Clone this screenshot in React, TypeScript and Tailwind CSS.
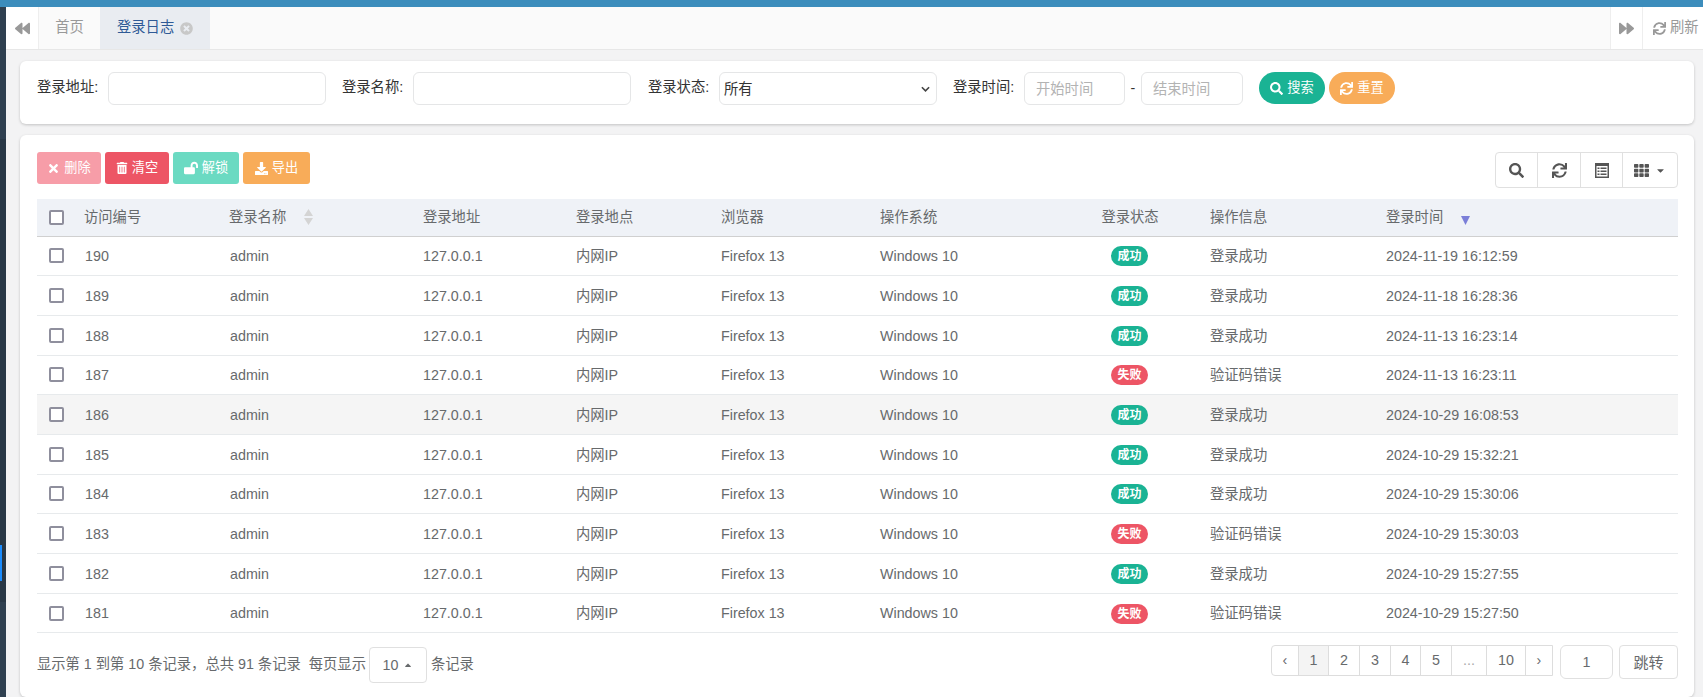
import { FaBackward, FaForward, FaTimes, FaTimesCircle, FaTrashAlt, FaLockOpen, FaDownload, FaSearch, FaSync, FaTh, FaCaretDown, FaCaretUp } from "react-icons/fa";

const rows = [
  [190, "2024-11-19 16:12:59", true],
  [189, "2024-11-18 16:28:36", true],
  [188, "2024-11-13 16:23:14", true],
  [187, "2024-11-13 16:23:11", false],
  [186, "2024-10-29 16:08:53", true],
  [185, "2024-10-29 15:32:21", true],
  [184, "2024-10-29 15:30:06", true],
  [183, "2024-10-29 15:30:03", false],
  [182, "2024-10-29 15:27:55", true],
  [181, "2024-10-29 15:27:50", false],
] as const;

function Check() {
  return <span className="block w-[15px] h-[15px] border-2 border-[#8f8f9d] rounded-[2px] bg-white" />;
}

function Field({ label, width, children }: { label: string; width?: string; children?: React.ReactNode }) {
  return (
    <div className="flex items-start">
      <label className="w-[71px] shrink-0 text-[14.3px] leading-[20px] text-[#333] mt-[5px] whitespace-nowrap">{label}:</label>
      {children ?? <input className={`${width} h-[33px] border border-[#e5e6e7] rounded-[6px] bg-white outline-none`} />}
    </div>
  );
}

export default function App() {
  return (
    <div className="h-[697px] w-[1703px] overflow-hidden bg-[#f3f3f4] flex text-[14.3px] text-[#676a6c] font-['Liberation_Sans','Noto_Sans_CJK_SC',sans-serif]">
      {/* sidebar edge */}
      <div className="w-[6px] shrink-0 mt-[7px] bg-[#2f4050] flex flex-col">
        <div className="h-[132px] shrink-0" />
        <div className="h-[463px] shrink-0 bg-[#293846] pt-[406px]">
          <div className="w-[2px] h-[36px] bg-[#1a8cff]" />
        </div>
      </div>
      <div className="flex-1 min-w-0 flex flex-col">
        <div className="h-[7px] bg-[#3c8dbc] -ml-[6px]" />
        {/* tabs */}
        <div className="h-[43px] flex bg-[#fafafa] border-b border-[#e7e7e7] shrink-0">
          <div className="w-[33px] bg-white border-r border-[#eee] flex items-center justify-center text-[#999]">
            <FaBackward size={15} />
          </div>
          <div className="w-[61px] flex items-center justify-center text-[#999]">首页</div>
          <div className="w-[110px] bg-[#e9ecf1] flex items-center pl-[17px] gap-[6px] text-[#2f5a96]">
            登录日志 <FaTimesCircle size={13} className="text-[#c8c8c8]" />
          </div>
          <div className="flex-1" />
          <div className="w-[33px] bg-white border-x border-[#eee] flex items-center justify-center text-[#999]">
            <FaForward size={15} />
          </div>
          <div className="w-[60px] bg-white flex items-center pl-[10px] gap-[4px] text-[#999] whitespace-nowrap">
            <FaSync size={13} />刷新
          </div>
        </div>

        <div className="flex-1 min-h-0 pl-[14px] pr-[9px] pt-[11px] flex flex-col gap-[11px]">
          {/* search form */}
          <div className="h-[63px] shrink-0 bg-white rounded-[6px] shadow-[0_1px_3px_rgba(0,0,0,0.2)] pl-[17px] pr-[16px] pt-[11px] flex">
            <Field label="登录地址" width="w-[218px]" />
            <div className="w-[16px]" />
            <Field label="登录名称" width="w-[218px]" />
            <div className="w-[17px]" />
            <Field label="登录状态">
              <div className="w-[218px] h-[33px] border border-[#e5e6e7] rounded-[6px] bg-white flex items-center justify-between pl-[4px] pr-[6px] text-[#333]">
                <span className="mt-[2px]">所有</span>
                <svg width="9" height="6" viewBox="0 0 10 6" fill="none" stroke="#444" strokeWidth="1.8"><path d="M1 1l4 4 4-4" /></svg>
              </div>
            </Field>
            <div className="w-[16px]" />
            <Field label="登录时间">
              <div className="flex items-center">
                <input placeholder="开始时间" className="w-[101px] h-[33px] border border-[#e5e6e7] rounded-[6px] bg-white pl-[11px] outline-none placeholder:text-[#b3b3b3]" />
                <span className="w-[16px] text-center text-[#333]">-</span>
                <input placeholder="结束时间" className="w-[102px] h-[33px] border border-[#e5e6e7] rounded-[6px] bg-white pl-[11px] outline-none placeholder:text-[#b3b3b3]" />
              </div>
            </Field>
            <div className="ml-[16px] flex gap-[4px] text-[13.2px]">
              <button className="w-[66px] h-[32px] rounded-full bg-[#1ab394] text-white flex items-center justify-center gap-[4px]"><FaSearch size={13} />搜索</button>
              <button className="w-[66px] h-[32px] rounded-full bg-[#f8ac59] text-white flex items-center justify-center gap-[4px]"><FaSync size={13} />重置</button>
            </div>
          </div>

          {/* table card */}
          <div className="flex-1 bg-white rounded-[6px] shadow-[0_1px_3px_rgba(0,0,0,0.2)] pl-[17px] pr-[16px] pt-[17px]">
            <div className="flex justify-between h-[47px]">
              <div className="flex gap-[4px] h-[32px] text-white text-[13.2px]">
                <button className="w-[64px] rounded-[3px] bg-[#f79da8] flex items-center justify-center gap-[4px]"><FaTimes size={13} />删除</button>
                <button className="w-[64px] rounded-[3px] bg-[#ed5565] flex items-center justify-center gap-[4px]"><FaTrashAlt size={12} />清空</button>
                <button className="w-[66px] rounded-[3px] bg-[#6bdac2] flex items-center justify-center gap-[4px]"><FaLockOpen size={14} />解锁</button>
                <button className="w-[67px] rounded-[3px] bg-[#f8ac59] flex items-center justify-center gap-[4px]"><FaDownload size={13} />导出</button>
              </div>
              <div className="flex h-[36px] border border-[#e0e0e0] rounded-[4px] text-[#555]">
                <div className="w-[42px] flex items-center justify-center border-r border-[#e0e0e0]"><FaSearch size={15} /></div>
                <div className="w-[43px] flex items-center justify-center border-r border-[#e0e0e0]"><FaSync size={15} /></div>
                <div className="w-[42px] flex items-center justify-center border-r border-[#e0e0e0]">
                  <svg width="14" height="15" viewBox="0 0 14 15">
                    <path fill="#555" fillRule="evenodd" d="M0 0h14v15H0zM1.5 3v10.5h11V3z" />
                    <path fill="#555" d="M2.5 4.5h2v1.5h-2zM5.5 4.5h6v1.5h-6zM2.5 7.5h2V9h-2zM5.5 7.5h6V9h-6zM2.5 10.5h2V12h-2zM5.5 10.5h6V12h-6z" />
                  </svg>
                </div>
                <div className="w-[54px] flex items-center justify-center gap-[6px]"><FaTh size={15} /><FaCaretDown size={11} /></div>
              </div>
            </div>
            <table className="w-full table-fixed border-collapse">
              <colgroup>
                <col className="w-[40px]" />
                <col className="w-[145px]" />
                <col className="w-[193px]" />
                <col className="w-[153px]" />
                <col className="w-[145px]" />
                <col className="w-[159px]" />
                <col className="w-[186px]" />
                <col className="w-[144px]" />
                <col className="w-[176px]" />
                <col />
              </colgroup>
              <thead>
                <tr className="h-[37px] bg-[#eff2f7] border-b border-[#d0d0d0] text-left text-[#676a6c]">
                  <th className="pl-[12px] font-normal"><Check /></th>
                  <th className="pl-[7px] font-normal">访问编号</th>
                  <th className="pl-[7px] font-normal">
                    <span className="flex items-center">登录名称
                      <svg width="9" height="16" viewBox="0 0 9 16" className="ml-[18px]" fill="#d4d4d4"><path d="M4.5 0L9 7H0zM0 9h9l-4.5 7z" /></svg>
                    </span>
                  </th>
                  <th className="pl-[8px] font-normal">登录地址</th>
                  <th className="pl-[8px] font-normal">登录地点</th>
                  <th className="pl-[8px] font-normal">浏览器</th>
                  <th className="pl-[8px] font-normal">操作系统</th>
                  <th className="text-center font-normal">登录状态</th>
                  <th className="pl-[8px] font-normal">操作信息</th>
                  <th className="pl-[8px] font-normal">
                    <span className="flex items-center">登录时间
                      <svg width="9" height="9" viewBox="0 0 9 9" className="ml-[18px] mt-[6px]" fill="#7b7fd8"><path d="M0 0h9L4.5 9z" /></svg>
                    </span>
                  </th>
                </tr>
              </thead>
              <tbody>
                {rows.map(([id, time, ok]) => (
                  <tr key={id} className={`h-[39.7px] border-b border-[#e7eaec] ${id === 186 ? "bg-[#f5f5f5]" : ""}`}>
                    <td className="pl-[12px]"><Check /></td>
                    <td className="pl-[8px] pt-[2px]">{id}</td>
                    <td className="pl-[8px] pt-[2px]">admin</td>
                    <td className="pl-[8px] pt-[2px]">127.0.0.1</td>
                    <td className="pl-[8px] pt-[2px]">内网IP</td>
                    <td className="pl-[8px] pt-[2px]">Firefox 13</td>
                    <td className="pl-[8px] pt-[2px]">Windows 10</td>
                    <td className="text-center">
                      <span className={`inline-block align-middle -ml-[1px] w-[37px] h-[20px] leading-[20px] rounded-full text-white text-[12px] font-bold ${ok ? "bg-[#1ab394]" : "bg-[#ed5565]"}`}>{ok ? "成功" : "失败"}</span>
                    </td>
                    <td className="pl-[8px] pt-[2px]">{ok ? "登录成功" : "验证码错误"}</td>
                    <td className="pl-[8px] pt-[2px]">{time}</td>
                  </tr>
                ))}
              </tbody>
            </table>
            {/* pagination */}
            <div className="flex justify-between mt-[12px]">
              <div className="flex items-center h-[36px] mt-[2px] whitespace-nowrap">
                <span className="mb-[2px]">显示第 1 到第 10 条记录，总共 91 条记录</span>
                <span className="ml-[8px] mb-[2px]">每页显示</span>
                <span className="ml-[3px] w-[58px] h-[36px] border border-[#e0e0e0] rounded-[4px] flex items-center justify-center gap-[5px]">10<FaCaretUp size={10} /></span>
                <span className="ml-[4px] mb-[2px]">条记录</span>
              </div>
              <div className="flex">
                <div className="flex h-[31px] border border-[#ddd] rounded-l-[4px]">
                  {["‹", "1", "2", "3", "4", "5", "...", "10", "›"].map((p, i) => (
                    <span key={i} className={`flex items-center justify-center border-r last:border-r-0 border-[#ddd] ${["w-[27px]", "w-[30px]", "w-[31px]", "w-[31px]", "w-[30px]", "w-[31px]", "w-[35px]", "w-[39px]", "w-[26px]"][i]} ${p === "1" ? "bg-[#f4f4f4]" : ""} ${p === "..." ? "text-[#aaa]" : ""}`}>{p}</span>
                  ))}
                </div>
                <div className="ml-[7px] w-[53px] h-[34px] pt-[1px] border border-[#e0e0e0] rounded-[6px] flex items-center justify-center">1</div>
                <div className="ml-[6px] w-[59px] h-[34px] pt-[2px] border border-[#e0e0e0] rounded-[4px] flex items-center justify-center text-[15px]">跳转</div>
              </div>
            </div>
          </div>
        </div>
      </div>
    </div>
  );
}
